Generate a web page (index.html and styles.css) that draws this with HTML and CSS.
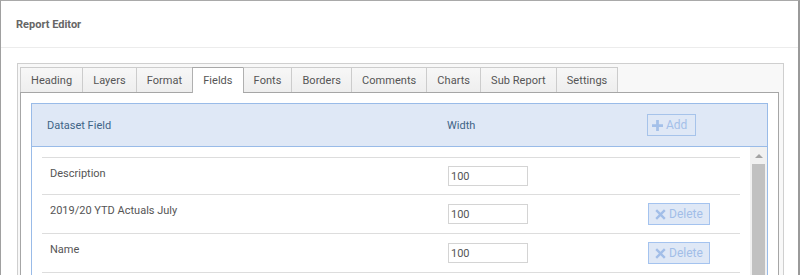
FILE: index.html
```html
<!DOCTYPE html>
<html>
<head>
<meta charset="utf-8">
<link rel="stylesheet" href="styles.css">
</head>
<body>
<div class="modal">
  <div class="modal-header"><span class="modal-title">Report Editor</span></div>
  <div class="modal-body">
    <div class="tabpanel">
      <div class="tabs">
        <div class="tab">Heading</div>
        <div class="tab">Layers</div>
        <div class="tab">Format</div>
        <div class="tab active">Fields</div>
        <div class="tab">Fonts</div>
        <div class="tab">Borders</div>
        <div class="tab">Comments</div>
        <div class="tab">Charts</div>
        <div class="tab">Sub Report</div>
        <div class="tab last">Settings</div>
      </div>
      <div class="tab-content">
        <div class="grid">
          <div class="grid-head">
            <div class="col-field">Dataset Field</div>
            <div class="col-width">Width</div>
            <div class="col-action">
              <button class="btn btn-add"><svg class="ico" viewBox="0 0 12 12" width="11" height="11"><path d="M4.5 0h3v4.5H12v3H7.5V12h-3V7.5H0v-3h4.5z" fill="currentColor"/></svg>Add</button>
            </div>
          </div>
          <div class="grid-body">
            <div class="rows">
              <div class="row">
                <div class="cell-field">Description</div>
                <div class="cell-width"><input class="inp" type="text" value="100"></div>
                <div class="cell-action"></div>
              </div>
              <div class="row">
                <div class="cell-field">2019/20 YTD Actuals July</div>
                <div class="cell-width"><input class="inp" type="text" value="100"></div>
                <div class="cell-action"><button class="btn btn-del"><svg class="ico" viewBox="0 0 12 12" width="11" height="11"><path d="M2.2 0.4L6 4.2 9.8 0.4 11.6 2.2 7.8 6 11.6 9.8 9.8 11.6 6 7.8 2.2 11.6 0.4 9.8 4.2 6 0.4 2.2z" fill="currentColor"/></svg>Delete</button></div>
              </div>
              <div class="row">
                <div class="cell-field">Name</div>
                <div class="cell-width"><input class="inp" type="text" value="100"></div>
                <div class="cell-action"><button class="btn btn-del"><svg class="ico" viewBox="0 0 12 12" width="11" height="11"><path d="M2.2 0.4L6 4.2 9.8 0.4 11.6 2.2 7.8 6 11.6 9.8 9.8 11.6 6 7.8 2.2 11.6 0.4 9.8 4.2 6 0.4 2.2z" fill="currentColor"/></svg>Delete</button></div>
              </div>
            </div>
            <div class="vscroll">
              <div class="vscroll-up"></div>
              <div class="vscroll-thumb"></div>
            </div>
          </div>
        </div>
      </div>
    </div>
  </div>
</div>
</body>
</html>
```
FILE: styles.css
```css
html, body {
  margin: 0;
  padding: 0;
  background: #ffffff;
}
body {
  font-family: Roboto, "Liberation Sans", Arial, sans-serif;
  font-size: 11px;
  color: #555;
  width: 800px;
  height: 275px;
  overflow: hidden;
}
.modal {
  box-sizing: border-box;
  width: 800px;
  height: 275px;
  border-top: 1px solid #a9a9a9;
  border-left: 1px solid #a0a0a0;
  border-right: 2px solid #9a9a9a;
  background: #fff;
  overflow: hidden;
  display: flex;
  flex-direction: column;
}
.modal-header {
  height: 46px;
  border-bottom: 1px solid #ececec;
  display: flex;
  align-items: center;
  padding-left: 15px;
  flex: none;
}
.modal-title {
  font-weight: bold;
  color: #666;
  font-size: 11px;
}
.modal-body {
  padding: 15px 14px 0 16px;
  flex: 1;
  min-height: 0;
}
.tabpanel {
  border: 1px solid #cfcfcf;
  border-bottom: none;
  background: #f8f8f8;
  padding: 3px 4px 0 2px;
  height: 100%;
  box-sizing: border-box;
  display: flex;
  flex-direction: column;
}
.tabs {
  display: flex;
  height: 25px;
  flex: none;
  position: relative;
  z-index: 1;
}
.tab {
  box-sizing: border-box;
  height: 25px;
  padding: 0 10px;
  border: 1px solid #cccccc;
  border-right: none;
  border-bottom: none;
  background: linear-gradient(#f7f7f7, #eeeeee);
  display: flex;
  align-items: center;
  color: #555;
  letter-spacing: 0.05px;
}
.tab.last {
  border-right: 1px solid #cccccc;
}
.tab.active {
  background: #fff;
  border-top-color: #a8a8a8;
  border-left-color: #b0b0b0;
  height: 26px;
  margin-bottom: -1px;
}
.tab.active + .tab {
  border-left-color: #b0b0b0;
}
.tab-content {
  flex: 1;
  min-height: 0;
  background: #fff;
  border: 1px solid #a6a6a6;
  border-bottom: none;
  padding: 10px 10px 0 10px;
}
.grid {
  border: 1px solid #99bbe8;
  border-bottom: none;
  height: 100%;
  box-sizing: border-box;
  display: flex;
  flex-direction: column;
}
.grid-head {
  height: 42px;
  flex: none;
  background: #dfe8f6;
  border-bottom: 1px solid #99bbe8;
  display: grid;
  grid-template-columns: 400px 200px 1fr;
  align-items: center;
  padding-left: 15px;
  color: #3e6486;
}
.btn {
  font-family: Roboto, "Liberation Sans", Arial, sans-serif;
  font-size: 12px;
  box-sizing: border-box;
  height: 22px;
  display: inline-flex;
  align-items: center;
  gap: 3px;
  padding: 0 5px 0 4px;
  margin: 0;
  cursor: pointer;
}
.btn-add {
  background: transparent;
  border: 1px solid #a6c3ea;
  color: #a4c0e9;
  width: 49px;
}
.btn-del {
  background: #dfe8f6;
  border: 1px solid #a4c3ef;
  color: #a2bee8;
  width: 62px;
  padding-left: 6px;
}
.ico {
  flex: none;
}
.grid-body {
  flex: 1;
  min-height: 0;
  display: flex;
}
.rows {
  flex: 1;
  padding: 10px 10px 0 10px;
}
.row {
  display: grid;
  grid-template-columns: 398px 200px 1fr;
  align-items: center;
  padding: 8px 0 8px 8px;
  border-top: 1px solid #dddddd;
}
.row:last-child {
  border-bottom: 1px solid #dddddd;
}
.cell-field {
  align-self: start;
  margin-top: 1px;
}
.cell-action {
  min-height: 20px;
}
.inp {
  box-sizing: border-box;
  width: 80px;
  height: 20px;
  border: 1px solid #d4d4d4;
  padding: 0 2px;
  margin: 0;
  font-family: Roboto, "Liberation Sans", Arial, sans-serif;
  font-size: 11px;
  color: #555;
  outline: none;
}
.vscroll {
  width: 17px;
  flex: none;
  background: #f1f1f1;
  display: flex;
  flex-direction: column;
  align-items: center;
}
.vscroll-up {
  margin-top: 7px;
  width: 0;
  height: 0;
  border-left: 4px solid transparent;
  border-right: 4px solid transparent;
  border-bottom: 4px solid #a3a3a3;
}
.vscroll-thumb {
  margin-top: 6px;
  width: 13px;
  flex: 1;
  background: #c1c1c1;
}
```
